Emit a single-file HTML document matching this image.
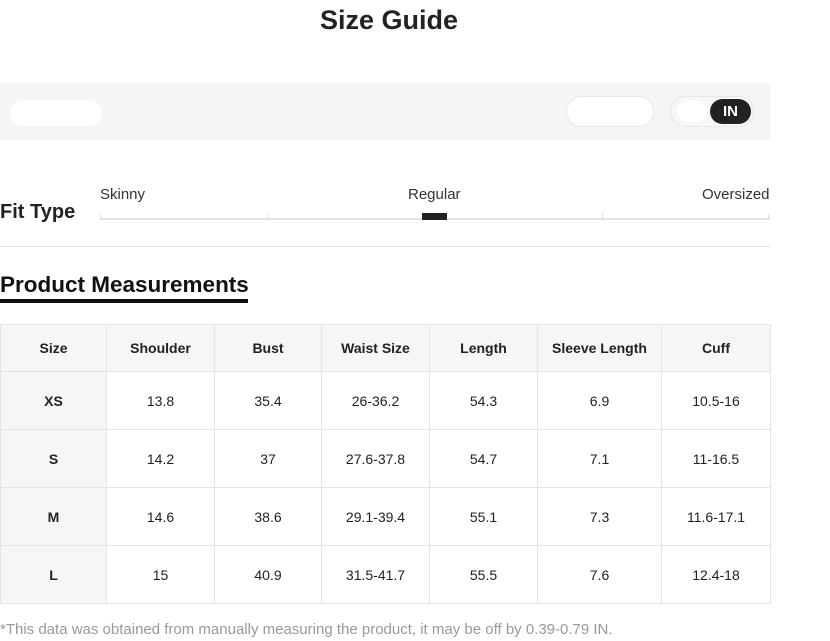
<!DOCTYPE html>
<html><head><style>
body{margin:0;width:830px;height:641px;background:#fff;font-family:"Liberation Sans",Arial,sans-serif;color:#222;position:relative;overflow:hidden}
.a{position:absolute}
table{border-collapse:collapse;position:absolute;left:0;top:324px;width:770px;table-layout:fixed}
td{border:1px solid #e5e5e5;text-align:center;font-size:14px;color:#222;padding:0}
tr.h td{background:#f6f6f6;font-weight:bold;height:46px}
tr.r td{height:57px}
tr.r td:first-child{background:#f6f6f6;font-weight:bold}
</style></head><body>
<div class="a" style="left:0;width:778px;top:5px;text-align:center;font-size:27px;font-weight:bold;color:#222">Size Guide</div>
<div class="a" style="left:0;top:83px;width:770px;height:57px;background:#f5f5f5"></div>
<div class="a" style="left:10px;top:100px;width:92px;height:26px;border-radius:13px;background:#fff"></div>
<div class="a" style="left:566px;top:96px;width:88px;height:31px;border-radius:16px;background:#fff;border:1px solid #e8e8e8;box-sizing:border-box"></div>
<div class="a" style="left:670px;top:96px;width:84px;height:31px;border-radius:16px;background:#f7f7f7;border:1px solid #e8e8e8;box-sizing:border-box"></div>
<div class="a" style="left:677px;top:100px;width:30px;height:22px;border-radius:11px;background:#fff"></div>
<div class="a" style="left:710px;top:99px;width:41px;height:25px;border-radius:13px;background:#222;color:#fff;font-size:15px;font-weight:bold;text-align:center;line-height:25px">IN</div>
<div class="a" style="left:0;top:201px;font-size:20px;font-weight:bold">Fit Type</div>
<div class="a" style="left:100px;top:186px;font-size:15px;color:#333">Skinny</div>
<div class="a" style="left:408px;top:186px;font-size:15px;color:#333">Regular</div>
<div class="a" style="left:702px;top:186px;font-size:15px;color:#333">Oversized</div>
<div class="a" style="left:100px;top:218px;width:670px;height:2px;background:#e3e3e3"></div>
<div class="a" style="left:100px;top:214px;width:1px;height:6px;background:#ddd"></div>
<div class="a" style="left:267px;top:214px;width:1px;height:6px;background:#ddd"></div>
<div class="a" style="left:602px;top:214px;width:1px;height:6px;background:#ddd"></div>
<div class="a" style="left:768px;top:214px;width:1px;height:6px;background:#ddd"></div>
<div class="a" style="left:422px;top:213px;width:25px;height:7px;background:#222"></div>
<div class="a" style="left:0;top:246px;width:770px;height:1px;background:#e5e5e5"></div>
<div class="a" style="left:0;top:272px;font-size:22.5px;font-weight:bold;color:#111">Product Measurements</div>
<div class="a" style="left:0;top:299px;width:248px;height:4px;background:#111"></div>
<table>
<colgroup><col style="width:106px"><col style="width:108px"><col style="width:107px"><col style="width:108px"><col style="width:108px"><col style="width:124px"><col style="width:109px"></colgroup>
<tr class="h"><td>Size</td><td>Shoulder</td><td>Bust</td><td>Waist Size</td><td>Length</td><td>Sleeve Length</td><td>Cuff</td></tr>
<tr class="r"><td>XS</td><td>13.8</td><td>35.4</td><td>26-36.2</td><td>54.3</td><td>6.9</td><td>10.5-16</td></tr>
<tr class="r"><td>S</td><td>14.2</td><td>37</td><td>27.6-37.8</td><td>54.7</td><td>7.1</td><td>11-16.5</td></tr>
<tr class="r"><td>M</td><td>14.6</td><td>38.6</td><td>29.1-39.4</td><td>55.1</td><td>7.3</td><td>11.6-17.1</td></tr>
<tr class="r"><td>L</td><td>15</td><td>40.9</td><td>31.5-41.7</td><td>55.5</td><td>7.6</td><td>12.4-18</td></tr>
</table>
<div class="a" style="left:0;top:621px;font-size:15px;color:#999">*This data was obtained from manually measuring the product, it may be off by 0.39-0.79 IN.</div>
</body></html>
